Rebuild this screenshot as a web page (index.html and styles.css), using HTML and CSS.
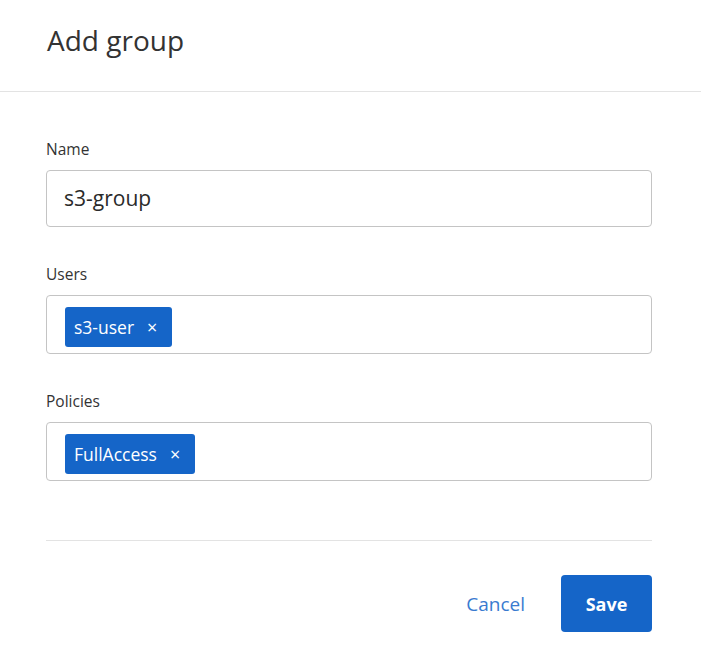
FILE: index.html
```html
<!DOCTYPE html>
<html>
<head>
<meta charset="utf-8">
<link rel="stylesheet" href="styles.css">
</head>
<body>
<div class="dialog">
  <div class="header"><h1 class="title">Add group</h1></div>
  <div class="body">
    <div class="field">
      <label class="label">Name</label>
      <div class="input text-input">s3-group</div>
    </div>
    <div class="field">
      <label class="label">Users</label>
      <div class="input tag-input"><span class="tag">s3-user<span class="x">×</span></span></div>
    </div>
    <div class="field">
      <label class="label">Policies</label>
      <div class="input tag-input"><span class="tag">FullAccess<span class="x">×</span></span></div>
    </div>
    <div class="footer">
      <button class="btn-link">Cancel</button>
      <button class="btn-primary">Save</button>
    </div>
  </div>
</div>
</body>
</html>
```
FILE: styles.css
```css
html, body { margin: 0; padding: 0; background: #fff; }
body { font-family: "Open Sans", "Noto Sans", sans-serif; color: #333; }
.dialog { width: 701px; height: 662px; }
.header { height: 92px; border-bottom: 1px solid #e3e3e3; box-sizing: border-box; padding: 20px 0 0 47px; }
.title { margin: 0; font-weight: 400; font-size: 28px; line-height: 40px; color: #333; }
.body { padding: 46px 49px 0 46px; }
.field { display: flex; flex-direction: column; margin-bottom: 36px; }
.label { font-size: 15.5px; line-height: 22px; color: #333; margin-bottom: 10px; }
.input { border: 1px solid #c4c4c4; border-radius: 4px; box-sizing: border-box; }
.text-input { height: 57px; padding: 0 17px; font-size: 21px; line-height: 55px; color: #2a2a2a; }
.tag-input { height: 59px; padding: 11px 17px 0 18px; }
.tag { display: inline-flex; align-items: center; height: 40px; padding: 0 15px 0 9px; background: #1565c8; color: #fff; border-radius: 3px; font-size: 17.5px; box-sizing: border-box; }
.x { margin-left: 13px; font-size: 18px; }
.footer { margin-top: 59px; border-top: 1px solid #e3e3e3; padding-top: 34px; display: flex; justify-content: flex-end; align-items: center; gap: 36px; }
.btn-link { background: none; border: none; color: #3a7bd0; font-family: inherit; font-size: 19px; padding: 0; }
.btn-primary { width: 91px; height: 57px; border: none; border-radius: 4px; background: #1565c8; color: #fff; font-family: inherit; font-size: 18px; font-weight: 700; }
```
